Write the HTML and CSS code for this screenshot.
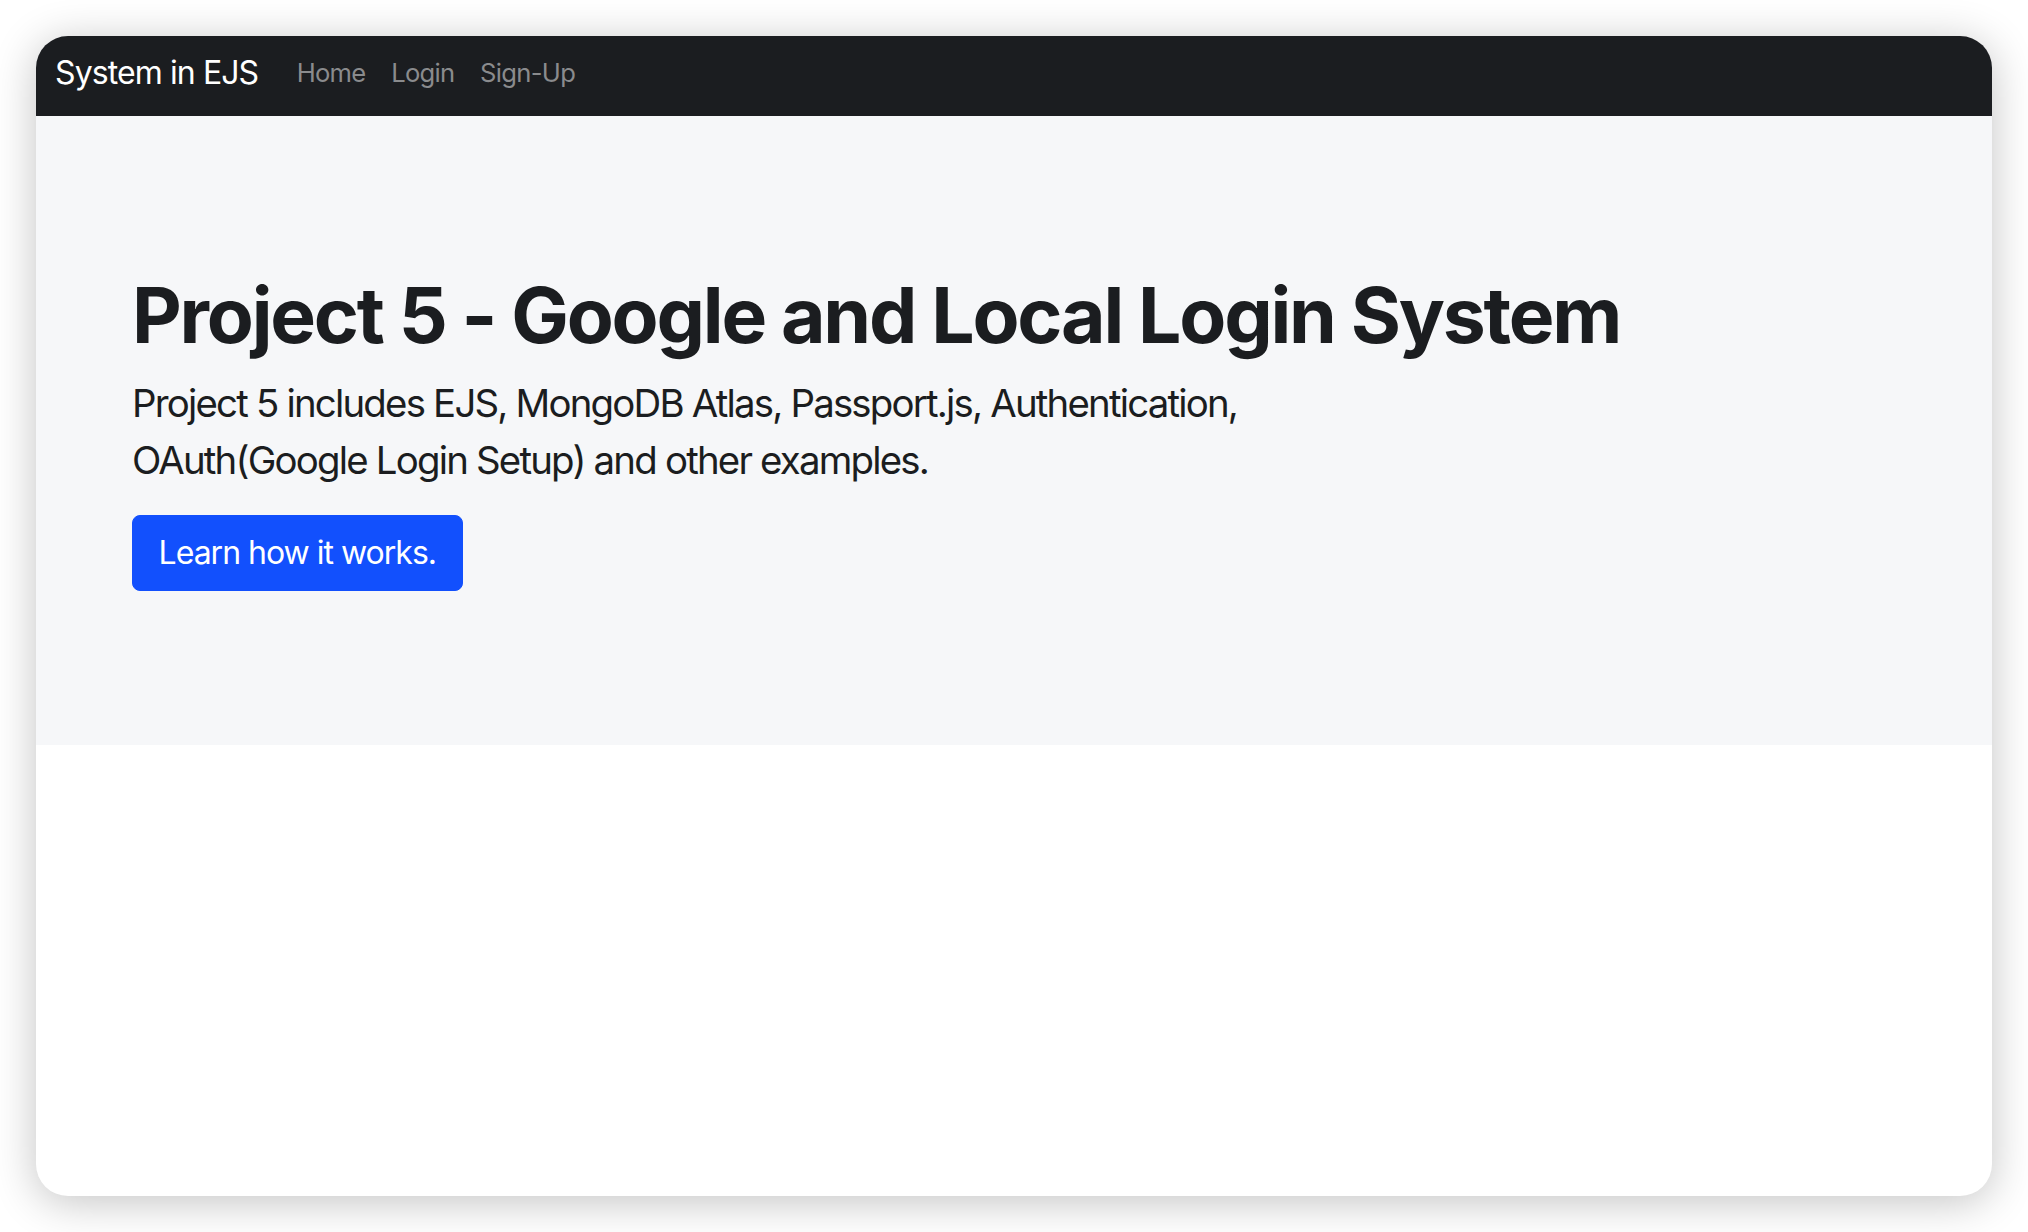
FILE: index.html
```html
<!DOCTYPE html>
<html lang="en">
<head>
<meta charset="utf-8">
<title>System in EJS</title>
<link rel="stylesheet" href="styles.css">
</head>
<body>
<div class="window">
  <nav class="navbar">
    <a class="brand" href="#">System in EJS</a>
    <ul class="nav">
      <li><a class="nav-link" href="#">Home</a></li>
      <li><a class="nav-link" href="#">Login</a></li>
      <li><a class="nav-link" href="#">Sign-Up</a></li>
    </ul>
  </nav>
  <section class="hero">
    <div class="hero-inner">
      <h1 class="hero-title">Project 5 - Google and Local Login System</h1>
      <p class="hero-lead">Project 5 includes EJS, MongoDB Atlas, Passport.js, Authentication, OAuth(Google Login Setup) and other examples.</p>
      <a class="btn-primary" href="#">Learn how it works.</a>
    </div>
  </section>
</div>
</body>
</html>
```
FILE: styles.css
```css
* { box-sizing: border-box; }
html, body { margin: 0; padding: 0; background: #ffffff; }
body {
  font-family: Inter, "Noto Sans", "Liberation Sans", sans-serif;
  color: #1b1d20;
  padding: 36px;
}
.window {
  width: 1956px;
  height: 1160px;
  border-radius: 32px;
  overflow: hidden;
  background: #ffffff;
  box-shadow: 0 6px 44px rgba(0, 0, 0, 0.24);
}
.navbar {
  height: 80px;
  background: #1b1d20;
  display: flex;
  align-items: center;
  padding: 0 19px 8px;
}
.brand {
  color: #ffffff;
  text-decoration: none;
  font-size: 32px;
  letter-spacing: -0.9px;
  margin-right: 25.6px;
}
.nav {
  display: flex;
  list-style: none;
  margin: 0;
  padding: 0;
}
.nav-link {
  display: block;
  padding: 0 12.8px;
  color: #8a8b8d;
  text-decoration: none;
  font-size: 25.6px;
  letter-spacing: -0.7px;
}
.hero {
  background: #f6f7f9;
  padding: 76.8px;
}
.hero-inner {
  padding: 76.8px 19.2px;
}
.hero-title {
  margin: 0 0 12.8px;
  font-size: 76.8px;
  line-height: 1.2;
  font-weight: 700;
  letter-spacing: -2.2px;
}
.hero-lead {
  margin: 0 0 25.6px;
  width: 66.6667%;
  font-size: 38.4px;
  line-height: 1.5;
  letter-spacing: -1.8px;
}
.btn-primary {
  display: inline-block;
  background: #1250fd;
  color: #ffffff;
  text-decoration: none;
  font-size: 32px;
  line-height: 1.5;
  padding: 12.8px 25.6px;
  border: 1.6px solid #1250fd;
  border-radius: 8px;
  letter-spacing: -1px;
}
```
